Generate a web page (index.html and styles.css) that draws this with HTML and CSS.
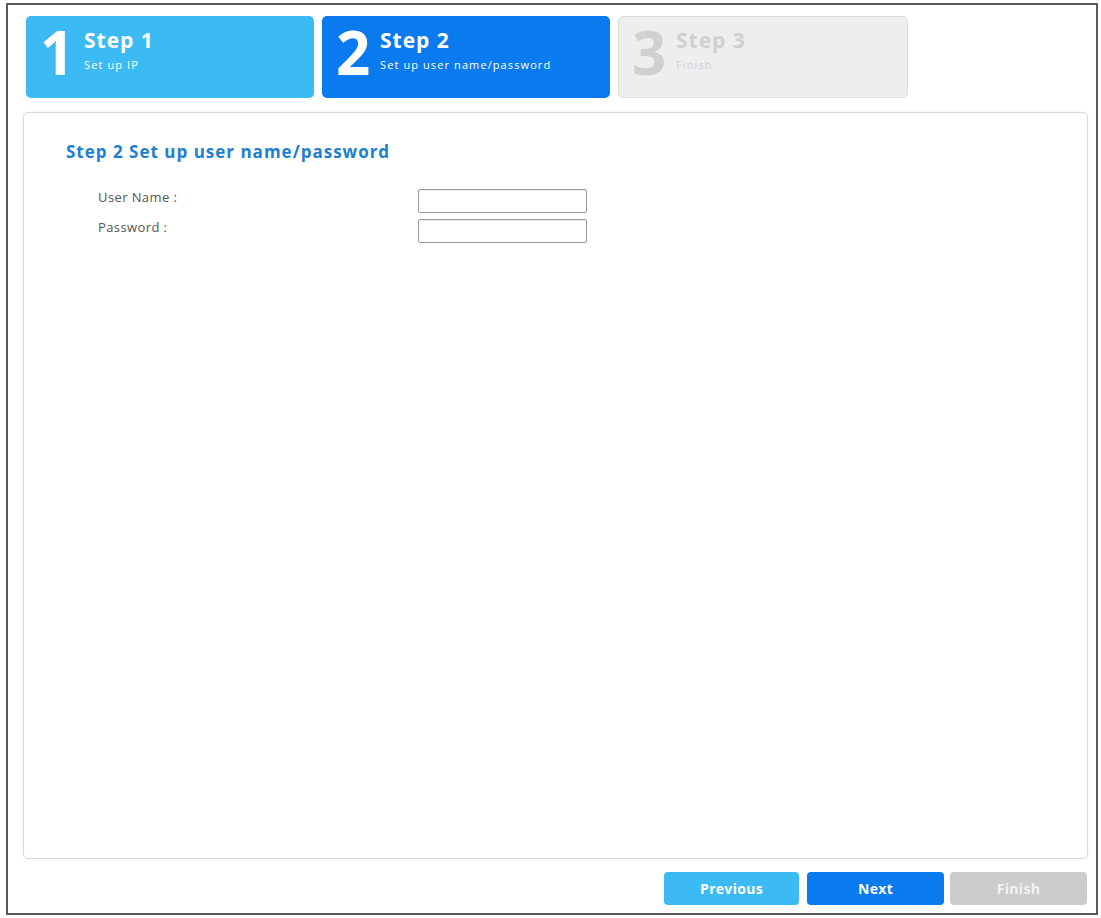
FILE: index.html
```html
<!DOCTYPE html>
<html lang="en">
<head>
<meta charset="utf-8">
<title>Wizard - Step 2</title>
<link rel="stylesheet" href="styles.css">
</head>
<body>
<div class="frame">
  <div class="steps">
    <div class="step step-done">
      <span class="step-num">1</span>
      <div class="step-text">
        <div class="step-title">Step 1</div>
        <div class="step-sub">Set up IP</div>
      </div>
    </div>
    <div class="step step-active">
      <span class="step-num">2</span>
      <div class="step-text">
        <div class="step-title">Step 2</div>
        <div class="step-sub">Set up user name/password</div>
      </div>
    </div>
    <div class="step step-todo">
      <span class="step-num">3</span>
      <div class="step-text">
        <div class="step-title">Step 3</div>
        <div class="step-sub">Finish</div>
      </div>
    </div>
  </div>
  <div class="panel">
    <h2 class="panel-title">Step 2 Set up user name/password</h2>
    <div class="form">
      <label class="form-label" for="user">User Name :</label>
      <input class="form-input" id="user" type="text">
      <label class="form-label" for="pass">Password :</label>
      <input class="form-input" id="pass" type="password">
    </div>
  </div>
  <div class="actions">
    <button class="btn btn-prev">Previous</button>
    <button class="btn btn-next">Next</button>
    <button class="btn btn-finish">Finish</button>
  </div>
</div>
</body>
</html>
```
FILE: styles.css
```css
html, body {
  margin: 0;
  padding: 0;
  background: #ffffff;
}
body {
  font-family: "Open Sans", "DejaVu Sans", sans-serif;
}
.frame {
  box-sizing: border-box;
  margin: 3px 0 0 6px;
  width: 1092px;
  height: 912px;
  border: 2px solid #5a5a5a;
  padding: 11px 8px 0 15px;
  display: flex;
  flex-direction: column;
}
.steps {
  display: flex;
  gap: 8px;
  padding-left: 3px;
  height: 82px;
}
.step {
  box-sizing: border-box;
  width: 288px;
  height: 82px;
  border-radius: 5px;
  display: flex;
  align-items: flex-start;
  padding-left: 14px;
  color: #ffffff;
}
.step-todo {
  width: 290px;
  background: #eeeeee;
  border: 1px solid #dddddd;
  color: #d0d0d0;
  padding-left: 13px;
}
.step-done { background: #3bbaf4; }
.step-active { background: #0a7bef; }
.step-num {
  width: 44px;
  font-size: 60px;
  font-weight: 700;
  line-height: 60px;
  margin-top: 6px;
}
.step-todo .step-num { margin-top: 5px; }
.step-text {
  display: flex;
  flex-direction: column;
  margin-top: 12px;
}
.step-todo .step-text { margin-top: 11px; }
.step-title {
  font-size: 21px;
  font-weight: 700;
  line-height: 24px;
  letter-spacing: 1px;
}
.step-sub {
  margin-top: 6px;
  font-size: 11px;
  line-height: 14px;
  letter-spacing: 1.1px;
}
.panel {
  box-sizing: border-box;
  margin-top: 14px;
  height: 747px;
  border: 1px solid #d9d9d9;
  border-radius: 5px;
  box-shadow: 0 0 2px rgba(0, 0, 0, 0.08);
  padding: 28px 0 0 42px;
}
.panel-title {
  margin: 0;
  font-size: 17px;
  line-height: 22px;
  font-weight: 700;
  letter-spacing: 1px;
  color: #1c7fd3;
}
.form {
  margin-top: 26px;
  margin-left: 32px;
  display: grid;
  grid-template-columns: 320px 169px;
  row-gap: 6px;
  align-items: center;
}
.form-label {
  font-size: 13px;
  letter-spacing: 0.4px;
  color: #555555;
  margin-top: -9px;
}
.form-input {
  box-sizing: border-box;
  width: 169px;
  height: 24px;
  border: 1px solid #9a9a9a;
  border-radius: 2px;
  box-shadow: inset 0 1px 1px rgba(0, 0, 0, 0.08);
  margin: 0;
}
.actions {
  display: flex;
  justify-content: flex-end;
  gap: 8px;
  margin-top: 13px;
  padding-right: 1px;
}
.btn {
  width: 136px;
  height: 33px;
  border: none;
  border-radius: 4px;
  color: #ffffff;
  font-family: "Open Sans", "DejaVu Sans", sans-serif;
  font-size: 14px;
  font-weight: 700;
  letter-spacing: 0.3px;
}
.btn-prev { background: #3bbaf4; width: 135px; }
.btn-next { background: #0a7bef; width: 137px; margin-right: -2px; }
.btn-finish { background: #cccccc; color: #f2f2f2; width: 137px; }
```
